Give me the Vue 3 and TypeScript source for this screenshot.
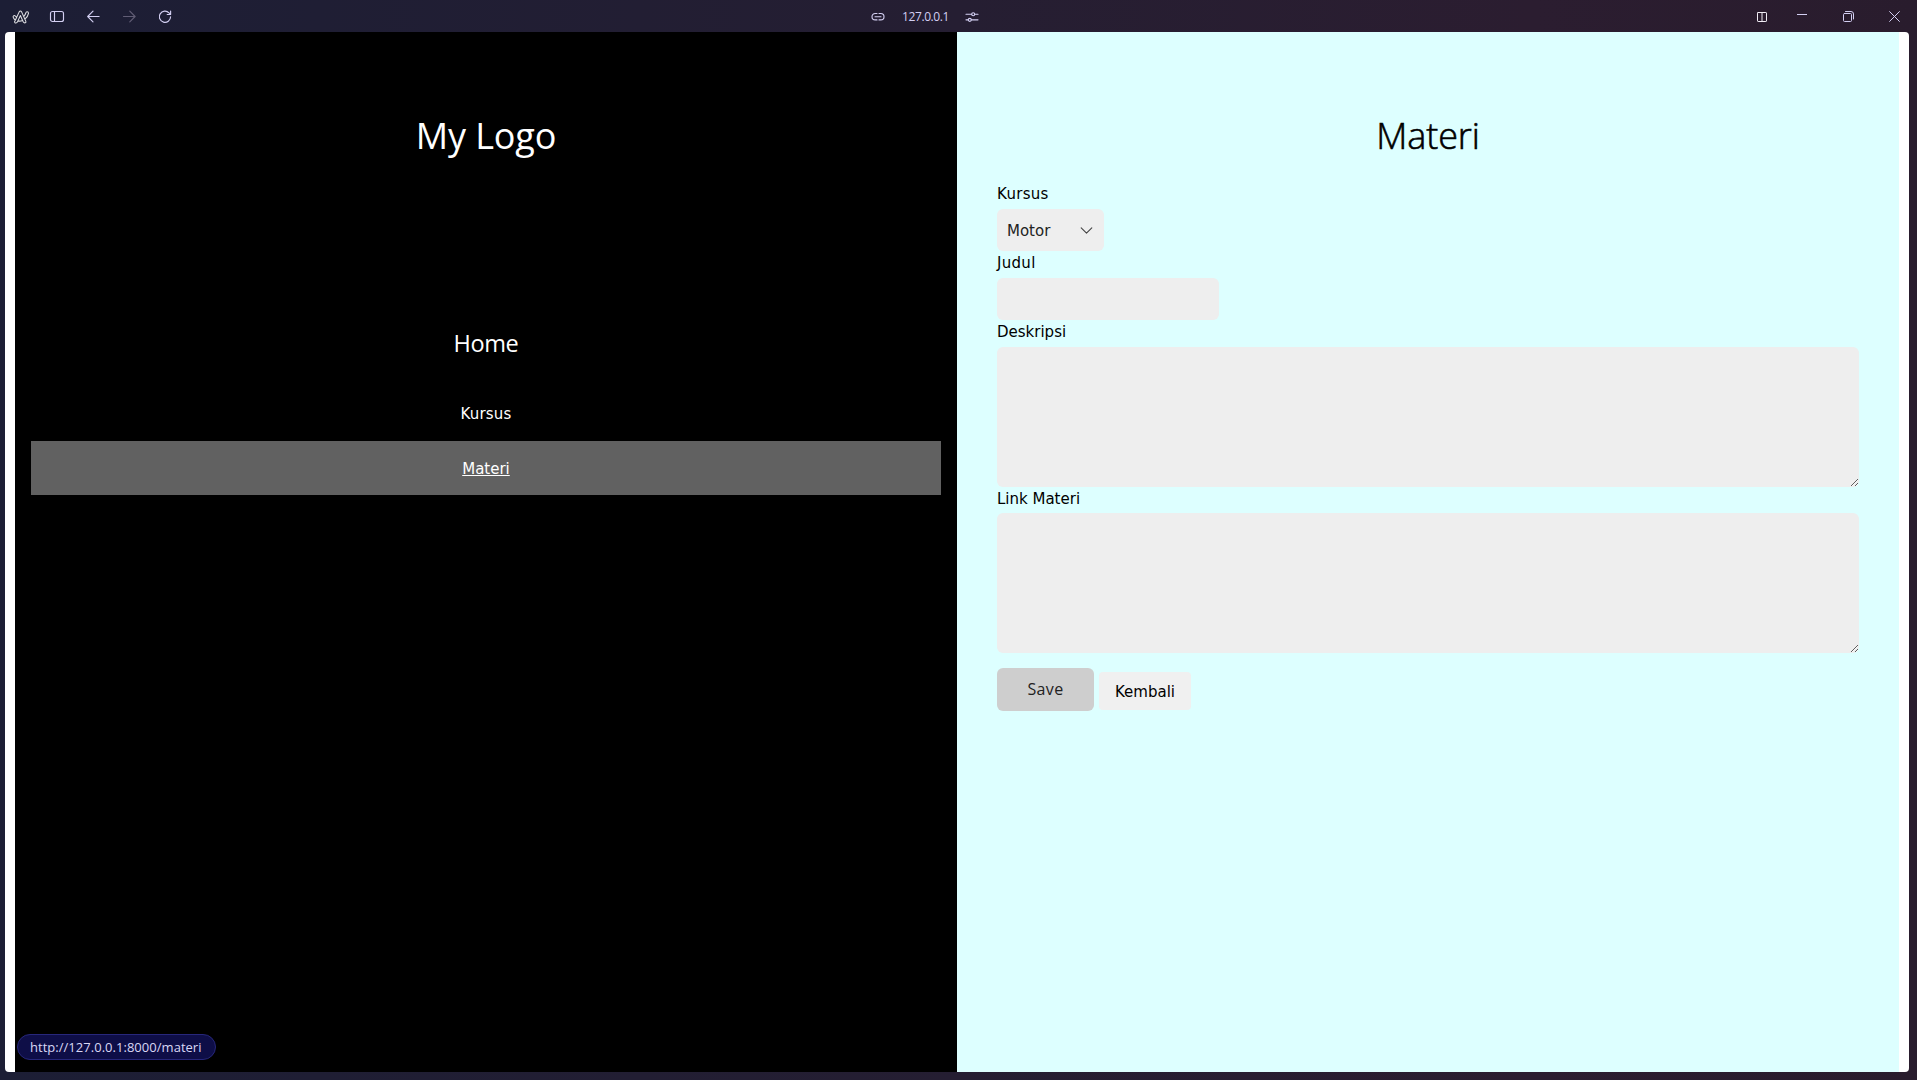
<script setup lang="ts">
import { ref } from 'vue'

interface NavItem {
  label: string
  active: boolean
}

const navItems: NavItem[] = [
  { label: 'Kursus', active: false },
  { label: 'Materi', active: true },
]
const title = ref('')
const description = ref('')
const link = ref('')
</script>

<template>
  <div class="browser">
    <header class="toolbar">
      <div class="tools left">
        <svg class="arc" width="18" height="16" viewBox="0 0 18 16">
          <path d="M3.3 11.2 2.6 12.6Q2.5 14 3.9 14 5 14 5.4 12.9L5.900 11.900Q8.200 12.500 10.600 11.500L11.400 13.100Q12 14.200 13.300 13.800 14.300 13.300 13.800 12.100L12.900 10.200Q15.800 7.800 16.500 4.300 16.500 2.800 15.200 2.700 14.100 2.600 13.800 4 13.200 6.200 11.700 7.600L9.600 2.900Q8.400 1 7.200 2.900L4.700 8.300 3.500 7.100Q2.500 6 1.500 6.900 .700 7.600 1.400 8.800 2.200 10.300 3.300 11.200L4.700 8.300M5.900 11.900 8.400 6.500 10.600 11.500M12.900 10.200 11.700 7.600" />
        </svg>
        <svg width="16" height="14" viewBox="0 0 16 14">
          <rect x="1.5" y="1.5" width="13" height="10" rx="2" />
          <path d="M5.5 1.5v10" />
        </svg>
        <svg class="back-arrow" width="14" height="14" viewBox="0 0 14 14"><path d="M12.100 6.500H.8M6 1.200 .7 6.500 6 11.800" /></svg>
        <svg class="dim" width="14" height="14" viewBox="0 0 14 14"><path d="M.5 6.500H12M6.800 1.200l5.300 5.300-5.300 5.300" /></svg>
        <svg width="14" height="14" viewBox="0 0 14 14">
          <path d="M11.600 6.800A5.600 5.600 0 1 1 10 2.800L11.400 4.200M11.600 1v3.500H8.200" />
        </svg>
      </div>
      <div class="address">
        <svg width="14" height="10" viewBox="0 0 14 10">
          <path d="M6 1.5H4.2a3.2 3.2 0 0 0 0 6.4H6M8 1.5h1.8a3.2 3.2 0 0 1 0 6.4H8M4 4.7h6" />
        </svg>
        <span>127.0.0.1</span>
        <svg width="14" height="12" viewBox="0 0 14 12">
          <path d="M1 3.2h5.6M9.8 3.2H13M1 8.8h2.2M6.4 8.8H13" />
          <circle cx="8.2" cy="3.2" r="1.5" /><circle cx="4.8" cy="8.8" r="1.5" />
        </svg>
      </div>
      <div class="tools right">
        <svg class="split" width="10" height="10" viewBox="0 0 10 10">
          <rect x=".5" y=".5" width="9" height="9" rx=".6" /><path d="M5 .5v9" />
        </svg>
        <svg width="10" height="10" viewBox="0 0 10 10"><path d="M0 3.5h10" /></svg>
        <svg width="11" height="11" viewBox="0 0 11 11">
          <rect x=".5" y="2.5" width="8" height="8" rx="1" /><path d="M2.5.5H8Q10.500 .5 10.500 3V8" />
        </svg>
        <svg width="11" height="11" viewBox="0 0 11 11"><path d="M.6.6l9.800 9.800M10.400.6.6 10.400" /></svg>
      </div>
    </header>

    <div class="page">
      <aside class="sidebar">
        <div class="logo">My Logo</div>
        <nav>
          <a class="home">Home</a>
          <a v-for="item in navItems" :key="item.label" class="item" :class="{ active: item.active }">{{ item.label }}</a>
        </nav>
      </aside>
      <main class="content">
        <h1>Materi</h1>
        <form @submit.prevent>
          <label class="wide">Kursus</label>
          <div class="select">
            <span>Motor</span>
            <svg width="13" height="8" viewBox="0 0 13 8"><path d="M1.200 .900 6.500 6.100 11.800 .900" /></svg>
          </div>
          <label class="wide">Judul</label>
          <input v-model="title" type="text" />
          <label>Deskripsi</label>
          <textarea v-model="description"></textarea>
          <label class="short">Link Materi</label>
          <textarea v-model="link"></textarea>
          <div class="actions">
            <button class="save" type="submit">Save</button>
            <a class="back">Kembali</a>
          </div>
        </form>
      </main>
      <div class="status">http://127.0.0.1:8000/materi</div>
    </div>
  </div>
</template>

<style>
body {
  overflow: hidden;
}
</style>

<style scoped>
* {
  box-sizing: border-box;
}
.browser {
  width: 1917px;
  height: 1080px;
  padding: 0 8px 8px 5px;
  background: linear-gradient(90deg, #1c1e35 0%, #251e32 50%, #2b1d30 80%, #291c2d 100%);
  font-family: "Open Sans", "Noto Sans", sans-serif;
}
svg {
  display: block;
  fill: none;
  stroke: #d3cff2;
  stroke-width: 1.15;
  stroke-linecap: round;
  stroke-linejoin: round;
}
.toolbar {
  height: 32px;
  display: grid;
  grid-template-columns: 1fr auto 1fr;
}
.tools,
.address {
  display: flex;
  align-items: center;
}
.left {
  padding: 2px 0 0 7px;
  gap: 22px;
}
.left .arc {
  margin-right: -3px;
  stroke: #dedee2;
  stroke-width: 1.05;
}
.dim {
  stroke: #615d75;
}
.address {
  margin-right: 64px;
  color: #d3cff2;
  font-size: 12px;
  gap: 17px;
}
.address span {
  width: 46px;
  letter-spacing: -0.4px;
  white-space: nowrap;
}
.address svg {
  margin-top: 1px;
}
.right {
  justify-content: flex-end;
  padding-right: 9px;
}
.right svg {
  stroke-width: 1;
}
.right .split {
  margin: 2px 30px 0 0;
  stroke: #f1edf5;
}
.right svg:nth-child(2) {
  margin-right: 36px;
}
.right svg:nth-child(3) {
  margin-right: 35px;
}
.page {
  position: relative;
  width: 1904px;
  height: 1040px;
  padding: 0 10px;
  display: grid;
  grid-template-columns: 942px 942px;
  background: #fff;
  border-radius: 4px;
  overflow: hidden;
}
.sidebar {
  background: #000;
  color: #fff;
  text-align: center;
  padding: 79px 16px 0;
}
.logo,
h1 {
  margin: 0;
  font-size: 36px;
  line-height: 50px;
  font-weight: 400;
  text-align: center;
}
.logo {
  letter-spacing: -0.15px;
}
h1 {
  font-weight: 300;
  letter-spacing: -0.1px;
  -webkit-text-stroke: 0.6px #000;
}
nav {
  display: flex;
  flex-direction: column;
  padding-top: 157px;
}
.home {
  height: 69px;
  font-size: 23.5px;
  line-height: 50px;
  letter-spacing: -0.4px;
}
.item {
  height: 54px;
  font: 15px/55px Verdana, "DejaVu Sans", sans-serif;
  letter-spacing: 0.2px;
}
.item.active {
  background: #616161;
  line-height: 56px;
  text-decoration: underline;
  letter-spacing: 0;
}
.content {
  background: #dff;
  color: #000;
  padding: 79px 40px 0;
}
form {
  display: flex;
  flex-direction: column;
  align-items: flex-start;
  padding-top: 21px;
  font-family: Verdana, "DejaVu Sans", sans-serif;
  font-size: 15px;
}
label {
  height: 27px;
  line-height: 25px;
}
.wide {
  letter-spacing: 0.3px;
}
label.short {
  height: 26px;
}
.select {
  width: 107px;
  height: 42px;
  padding: 2px 11px 0 10px;
  border-radius: 6px;
  background: #eee;
  color: #222;
  display: flex;
  align-items: center;
  justify-content: space-between;
}
.select svg {
  stroke: #444;
  stroke-width: 1.1;
}
input,
textarea {
  display: block;
  margin: 0;
  padding: 10px;
  border: 0;
  border-radius: 6px;
  background: #eee;
  outline: 0;
}
input {
  width: 222px;
  height: 42px;
}
textarea {
  width: 862px;
  height: 140px;
  resize: both;
}
.actions {
  display: flex;
  gap: 5px;
  margin-top: 15px;
}
.save {
  width: 97px;
  height: 43px;
  padding: 0;
  border: 0;
  border-radius: 6px;
  background: #cecece;
  color: #222;
  font: 16px/43px "Open Sans", sans-serif;
  letter-spacing: 0.4px;
}
.back {
  width: 92px;
  height: 38px;
  margin-top: 4px;
  border-radius: 4px;
  background: #f0f0f0;
  text-align: center;
  line-height: 40px;
}
.status {
  position: absolute;
  left: 12px;
  bottom: 12px;
  width: 199px;
  height: 26px;
  padding-left: 12px;
  border: 1px solid #27277b;
  border-radius: 13px;
  background: #0e0e47;
  color: #d9d7f5;
  font-size: 13px;
  line-height: 24px;
  letter-spacing: 0.03px;
  white-space: nowrap;
}
</style>
